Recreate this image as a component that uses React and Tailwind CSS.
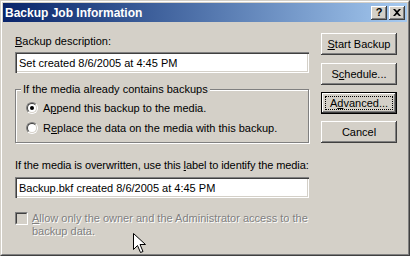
const raised =
  'bg-[#d4d0c8] shadow-[inset_-1px_-1px_0_#404040,inset_1px_1px_0_#ffffff,inset_-2px_-2px_0_#808080,inset_2px_2px_0_#d4d0c8]';
const sunken =
  'shadow-[inset_1px_1px_0_#808080,inset_2px_2px_0_#404040,inset_-1px_-1px_0_#ffffff,inset_-2px_-2px_0_#d4d0c8]';

function Button({ children, isDefault, className = '' }) {
  if (isDefault) {
    return (
      <div className={`h-[22px] border border-black ${className}`}>
        <div className={`h-full p-[3px] ${raised}`}>
          <div className="h-full border border-dotted border-black flex items-center justify-center">{children}</div>
        </div>
      </div>
    );
  }
  return <div className={`h-[22px] flex items-center justify-center ${raised} ${className}`}>{children}</div>;
}

function Radio({ checked }) {
  return (
    <div className="w-[12px] h-[12px] rounded-full border border-t-[#808080] border-l-[#808080] border-r-white border-b-white shrink-0">
      <div className="w-full h-full rounded-full border border-t-[#404040] border-l-[#404040] border-r-[#d4d0c8] border-b-[#d4d0c8] bg-white flex items-center justify-center">
        {checked && <div className="w-[4px] h-[4px] rounded-full bg-black"></div>}
      </div>
    </div>
  );
}

function TextField({ value }) {
  return (
    <div className={`h-[21px] bg-white flex items-center pl-[4px] ${sunken}`}>
      <span>{value}</span>
    </div>
  );
}

export default function App() {
  return (
    <div className="relative w-[410px] h-[256px] bg-[#d4d0c8] border border-t-[#d4d0c8] border-l-[#d4d0c8] border-r-[#404040] border-b-[#404040] font-['Liberation_Sans',Arial,sans-serif] text-[11px] leading-[14px] text-black">
      <div className="h-full flex flex-col border border-t-white border-l-white border-r-[#808080] border-b-[#808080] p-px">
        {/* title bar */}
        <div className="h-[19px] shrink-0 flex items-center pl-[2px] pr-[2px] bg-gradient-to-r from-[#0a246a] to-[#a6caf0]">
          <span className="text-white font-bold text-[12px]">Backup Job Information</span>
          <div className="ml-auto flex gap-[2px]">
            <div className={`w-[16px] h-[14px] flex items-center justify-center font-bold text-[11px] leading-none ${raised}`}>?</div>
            <div className={`w-[16px] h-[14px] flex items-center justify-center ${raised}`}>
              <svg width="8" height="7" viewBox="0 0 8 7">
                <path d="M0 0h2l2 2 2-2h2L5 3.5 8 7H6L4 5 2 7H0l3-3.5z" fill="#000" />
              </svg>
            </div>
          </div>
        </div>

        {/* body */}
        <div className="flex-1 flex pl-[12px] pr-[10px] pt-[11px] gap-[12px]">
          <div className="w-[294px] flex flex-col">
            <div className="mt-[1px] mb-[4px]">
              <u>B</u>ackup description:
            </div>
            <TextField value="Set created 8/6/2005 at 4:45 PM" />

            <div className="relative mt-[16px] border border-[#808080] shadow-[1px_1px_0_#ffffff,inset_1px_1px_0_#ffffff] pt-[8px] pb-[4px] pl-[10px]">
              <span className="absolute -top-[8px] left-[5px] px-[2px] bg-[#d4d0c8]">If the media already contains backups</span>
              <div className="h-[20px] flex items-center gap-[5px]">
                <Radio checked />
                <span>
                  A<u>p</u>pend this backup to the media.
                </span>
              </div>
              <div className="h-[20px] flex items-center gap-[5px]">
                <Radio />
                <span>
                  R<u>e</u>place the data on the media with this backup.
                </span>
              </div>
            </div>

            <div className="mt-[15px] mb-[5px] whitespace-nowrap tracking-[-0.1px]">
              If the media is overwritten, use this <u>l</u>abel to identify the media:
            </div>
            <TextField value="Backup.bkf created 8/6/2005 at 4:45 PM" />

            <div className="mt-[14px] flex items-start gap-[4px]">
              <div className="w-[13px] h-[13px] shrink-0 border border-t-[#808080] border-l-[#808080] border-r-white border-b-white">
                <div className="w-full h-full border border-t-[#404040] border-l-[#404040] border-r-[#d4d0c8] border-b-[#d4d0c8] bg-[#d4d0c8]"></div>
              </div>
              <span className="leading-[13px] text-[#808080] [text-shadow:1px_1px_0_#ffffff]">
                <u>A</u>llow only the owner and the Administrator access to the backup data.
              </span>
            </div>
          </div>

          <div className="w-[76px] flex flex-col">
            <Button>
              <span>
                <u>S</u>tart Backup
              </span>
            </Button>
            <Button className="mt-[8px]">
              <span>
                S<u>c</u>hedule...
              </span>
            </Button>
            <Button isDefault className="mt-[7px]">
              <span>
                A<u>d</u>vanced...
              </span>
            </Button>
            <Button className="mt-[7px]">Cancel</Button>
          </div>
        </div>
      </div>

      {/* mouse pointer */}
      <svg className="absolute left-[132px] top-[232px]" width="13" height="21" viewBox="0 0 13 21">
        <path d="M0.5 0.5v16l4-4 3 7 2.5-1-3-7h5.5z" fill="#fff" stroke="#000" strokeWidth="1" strokeLinejoin="miter" />
      </svg>
    </div>
  );
}
